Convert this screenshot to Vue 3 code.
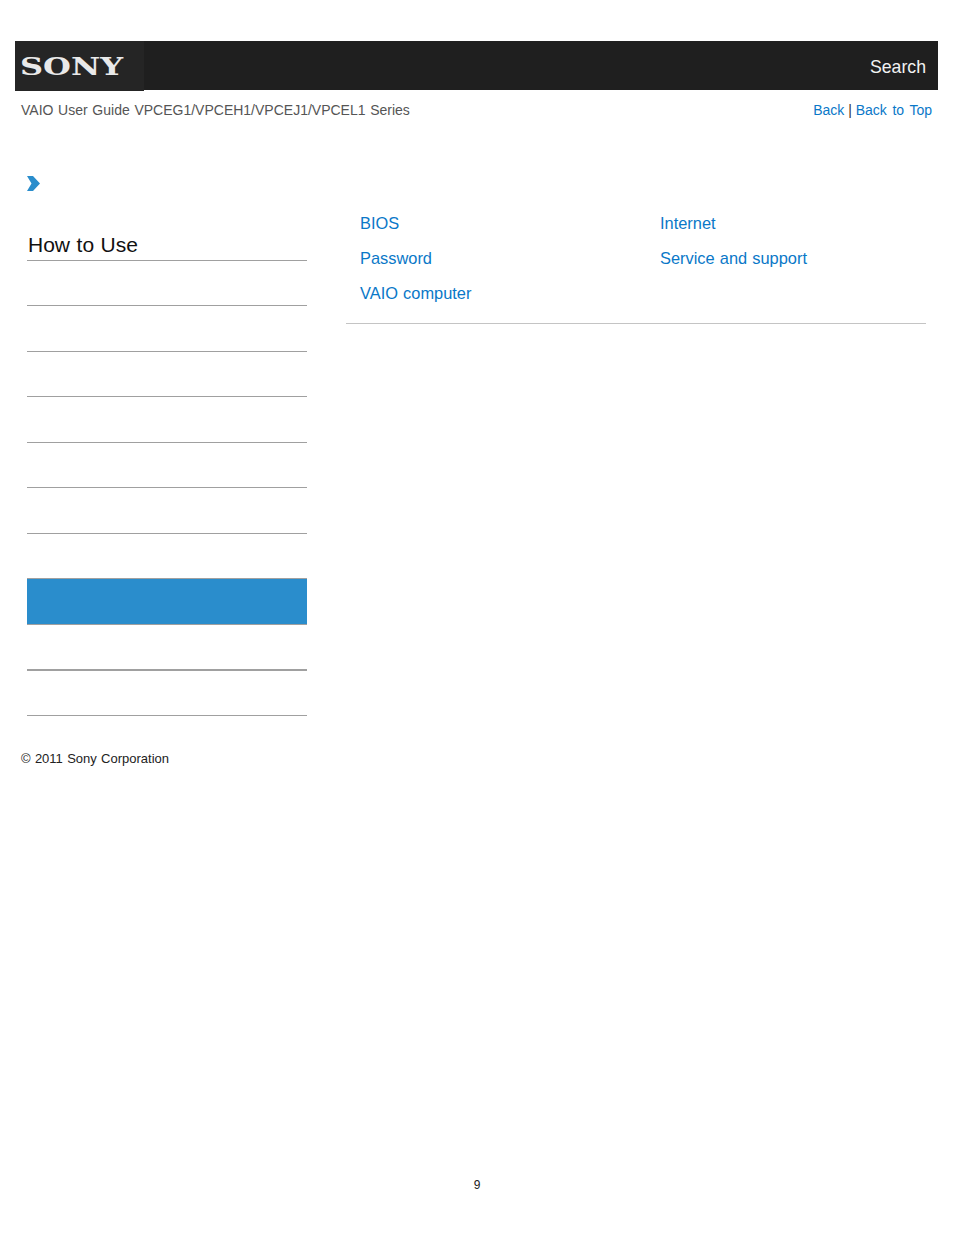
<script setup>
const navRows = [
  { id: 1 }, { id: 2 }, { id: 3 }, { id: 4 }, { id: 5 }, { id: 6 }, { id: 7 },
  { id: 8, active: true }, { id: 9, thick: true }, { id: 10 }
]
const links = ['BIOS', 'Internet', 'Password', 'Service and support', 'VAIO computer']
</script>

<template>
  <div class="page">
    <header class="topbar">
      <div class="logo"><span class="logo-text">SONY</span></div>
      <span class="search">Search</span>
    </header>
    <div class="subbar">
      <span class="guide">VAIO User Guide VPCEG1/VPCEH1/VPCEJ1/VPCEL1 Series</span>
      <span class="toplinks"><a>Back</a> | <a class="back-top">Back to Top</a></span>
    </div>
    <div class="chevron-row">
      <svg class="chevron" width="13" height="15" viewBox="0 0 13 15">
        <path d="M0 0H6L13 7.5L6 15H0L4.5 7.5Z" fill="#2a8dcc" />
      </svg>
    </div>
    <main class="columns">
      <aside class="sidebar">
        <h2 class="title">How to Use</h2>
        <div
          v-for="row in navRows"
          :key="row.id"
          class="nav-row"
          :class="{ active: row.active, thick: row.thick }"
        ></div>
      </aside>
      <section class="content">
        <div class="link-grid">
          <a v-for="link in links" :key="link">{{ link }}</a>
        </div>
      </section>
    </main>
    <p class="copyright">© 2011 Sony Corporation</p>
    <p class="pageno">9</p>
  </div>
</template>

<style>
html, body { margin: 0; background: #fff; }
</style>

<style scoped>
.page {
  width: 954px;
  height: 1235px;
  box-sizing: border-box;
  padding-top: 41px;
  font-family: "Liberation Sans", Arial, sans-serif;
  display: flex;
  flex-direction: column;
}
.topbar {
  margin: 0 16px 0 15px;
  height: 49px;
  background: #1f1f1f;
  display: flex;
  justify-content: space-between;
  color: #f2f2f2;
}
.logo {
  width: 129px;
  height: 50px;
  background: #252525;
  overflow: hidden;
  display: flex;
  align-items: center;
}
.logo-text {
  font-family: "DejaVu Serif", "Liberation Serif", serif;
  font-weight: 700;
  font-size: 25px;
  line-height: 50px;
  color: #e9e9e9;
  display: inline-block;
  margin-left: 5px;
  margin-top: 2px;
  transform: scaleX(1.28);
  transform-origin: left center;
}
.search {
  font-size: 17.7px;
  line-height: 52px;
  margin-right: 12px;
}
.subbar {
  display: flex;
  justify-content: space-between;
  padding: 0 22px 0 21px;
  margin-top: 11px;
  font-size: 14px;
  line-height: 18px;
  color: #555;
}
.guide { word-spacing: 0.8px; }
.toplinks { color: #333; }
.back-top { word-spacing: 1.7px; }
a { color: #0a78c8; }
.chevron-row {
  height: 15px;
  margin-top: 57px;
  padding-left: 27px;
}
.chevron { display: block; }
.columns {
  display: flex;
  margin-top: 1px;
  padding-left: 27px;
}
.sidebar { width: 280px; }
.title {
  margin: 0;
  height: 68.9px;
  box-sizing: border-box;
  padding-top: 41px;
  padding-left: 1px;
  font-size: 21px;
  font-weight: 400;
  word-spacing: 0.7px;
  line-height: 24px;
  color: #111;
  border-bottom: 1px solid #a0a0a0;
}
.nav-row {
  height: 45.5px;
  box-sizing: border-box;
  border-bottom: 1px solid #a0a0a0;
}
.nav-row.active { background: #2a8dcc; }
.nav-row.thick {
  height: 45.7px;
  border-bottom-width: 2px;
}
.content {
  margin-left: 39px;
  width: 580px;
  height: 132px;
  box-sizing: border-box;
  border-bottom: 1px solid #c4c4c4;
  padding: 0 14px;
}
.link-grid {
  display: grid;
  grid-template-columns: 300px 1fr;
  grid-auto-rows: 35px;
  margin-top: 14px;
  font-size: 16.4px;
  word-spacing: 0.6px;
  line-height: 35px;
}
.copyright {
  margin: 34px 0 0 21px;
  font-size: 13px;
  word-spacing: 0.7px;
  line-height: 18px;
  color: #222;
}
.pageno {
  margin: auto 0 42px;
  text-align: center;
  font-size: 12px;
  line-height: 16px;
  color: #222;
}
</style>
